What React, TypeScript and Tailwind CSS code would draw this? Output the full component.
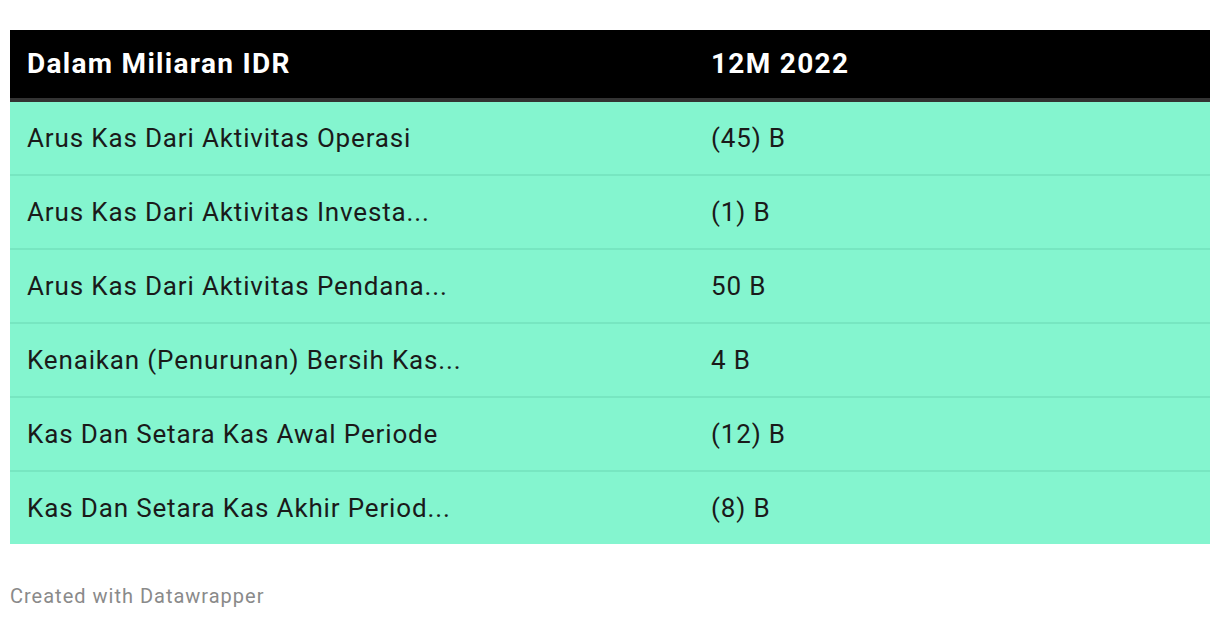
import React from "react";

const rows: [string, string][] = [
  ["Arus Kas Dari Aktivitas Operasi", "(45) B"],
  ["Arus Kas Dari Aktivitas Investa...", "(1) B"],
  ["Arus Kas Dari Aktivitas Pendana...", "50 B"],
  ["Kenaikan (Penurunan) Bersih Kas...", "4 B"],
  ["Kas Dan Setara Kas Awal Periode", "(12) B"],
  ["Kas Dan Setara Kas Akhir Period...", "(8) B"],
];

export default function App() {
  return (
    <div
      className="w-[1220px] h-[620px] bg-white px-[10px] pt-[30px]"
      style={{ fontFamily: "Roboto, 'Liberation Sans', sans-serif" }}
    >
      <div className="w-[1200px]">
        <div className="flex h-[72px] bg-black border-b-4 border-[#333333] text-white font-bold text-[28px] tracking-[1.3px] items-center">
          <div className="w-[684px] pl-[17px]">Dalam Miliaran IDR</div>
          <div className="flex-1 pl-[17px]">12M 2022</div>
        </div>
        {rows.map(([a, b], i) => (
          <div
            key={i}
            className={
              "flex h-[72px] box-content items-center bg-[#84f5cf] text-[#1a1a1a] text-[26px] tracking-[0.85px] " +
              (i < rows.length - 1 ? "border-b-2 border-[#77e6c1]" : "")
            }
          >
            <div className="w-[684px] pl-[17px]">{a}</div>
            <div className="flex-1 pl-[17px]">{b}</div>
          </div>
        ))}
      </div>
      <div className="mt-[37px] text-[20px] tracking-[1px] text-[#8a8a8a]">Created with Datawrapper</div>
    </div>
  );
}
